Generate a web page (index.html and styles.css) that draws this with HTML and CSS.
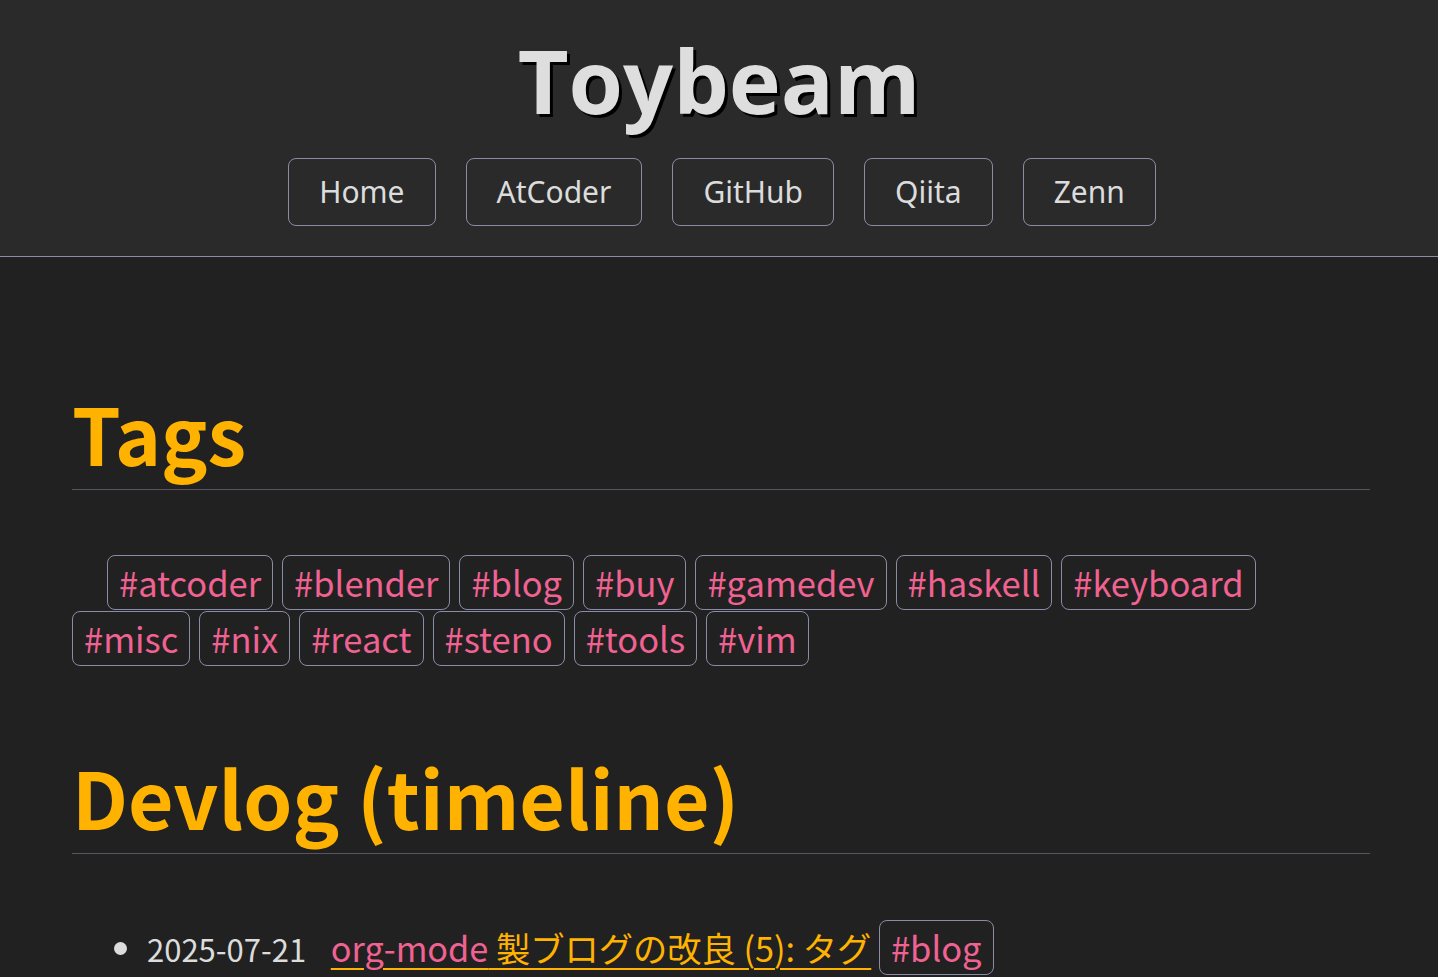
FILE: index.html
```html
<!DOCTYPE html>
<html lang="ja">
<head>
<meta charset="utf-8">
<title>Toybeam</title>
<link rel="stylesheet" href="styles.css">
</head>
<body>
<header class="site-header">
  <h1 class="site-title">Toybeam</h1>
  <nav class="site-nav">
    <a class="nav-btn" href="#">Home</a>
    <a class="nav-btn" href="#">AtCoder</a>
    <a class="nav-btn" href="#">GitHub</a>
    <a class="nav-btn" href="#">Qiita</a>
    <a class="nav-btn" href="#">Zenn</a>
  </nav>
</header>
<main class="content">
  <h2 class="section-title">Tags</h2>
  <div class="tag-list">
    <a class="tag first" href="#">#atcoder</a>
    <a class="tag" href="#">#blender</a>
    <a class="tag" href="#">#blog</a>
    <a class="tag" href="#">#buy</a>
    <a class="tag" href="#">#gamedev</a>
    <a class="tag" href="#">#haskell</a>
    <a class="tag" href="#">#keyboard</a>
    <a class="tag" href="#">#misc</a>
    <a class="tag" href="#">#nix</a>
    <a class="tag" href="#">#react</a>
    <a class="tag" href="#">#steno</a>
    <a class="tag" href="#">#tools</a>
    <a class="tag" href="#">#vim</a>
  </div>
  <h2 class="section-title devlog">Devlog (timeline)</h2>
  <ul class="timeline">
    <li class="entry">
      <span class="date">2025-07-21</span>
      <a class="post-link" href="#"><span class="code">org-mode</span> 製ブログの改良 (5): タグ</a>
      <a class="tag" href="#">#blog</a>
    </li>
    <li class="entry">
      <span class="date">2025-07-20</span>
      <a class="post-link" href="#"><span class="code">org-mode</span> 製ブログの改良 (4): 目次生成</a>
      <a class="tag" href="#">#nix</a>
      <a class="tag" href="#">#blog</a>
    </li>
  </ul>
</main>
</body>
</html>
```
FILE: styles.css
```css
html, body {
  margin: 0;
  padding: 0;
}
body {
  background: #212121;
  color: #dcdcdc;
  font-family: "Noto Sans CJK JP", "Noto Sans", sans-serif;
  font-size: 34px;
}
a { text-decoration: none; }

.site-header {
  background: #2a2a2a;
  border-bottom: 1px solid #8c8ca8;
  height: 256px;
  box-sizing: content-box;
  display: flex;
  flex-direction: column;
  align-items: center;
}
.site-title {
  margin: 20px 0 0 0;
  font-family: "Open Sans", "Noto Sans", sans-serif;
  font-weight: 700;
  font-size: 88px;
  line-height: 120px;
  color: #dedede;
  text-shadow: 3px 3px 0 #000;
}
.site-nav {
  display: flex;
  gap: 30px;
  margin-top: 18px;
  margin-left: 6px;
}
.nav-btn {
  font-family: "Noto Sans", sans-serif;
  font-size: 30px;
  line-height: 40px;
  color: #dcdcdc;
  border: 1px solid #8a8ca6;
  border-radius: 8px;
  padding: 13px 30px;
}

.content {
  padding: 0 68px 0 72px;
}
.section-title {
  margin: 0;
  padding-top: 120px;
  color: #ffb300;
  font-weight: 700;
  font-size: 78px;
  line-height: 110px;
  border-bottom: 1px solid #57555f;
  padding-bottom: 2px;
}
.section-title.devlog {
  padding-top: 75px;
  font-size: 78.5px;
}
.tag-list {
  display: flex;
  flex-wrap: wrap;
  column-gap: 9px;
  row-gap: 1px;
  margin-top: 65px;
}
.tag {
  display: inline-block;
  color: #f06292;
  font-size: 34.5px;
  border: 1px solid #8a8ca6;
  border-radius: 8px;
  padding: 2px 11px;
  line-height: 49px;
}
.tag.first {
  margin-left: 35px;
}
.timeline {
  margin: 65px 0 0 0;
  padding-left: 75px;
}
.entry {
  line-height: 56px;
}
.entry::marker {
  color: #dcdcdc;
}
.date {
  font-size: 31px;
  margin-right: 17px;
}
.post-link {
  font-size: 34.25px;
  color: #ffb300;
  text-decoration: underline;
  text-decoration-color: #ffb300;
  text-underline-offset: 6px;
  text-decoration-thickness: 2px;
}
.post-link .code {
  color: #f06292;
}
```
